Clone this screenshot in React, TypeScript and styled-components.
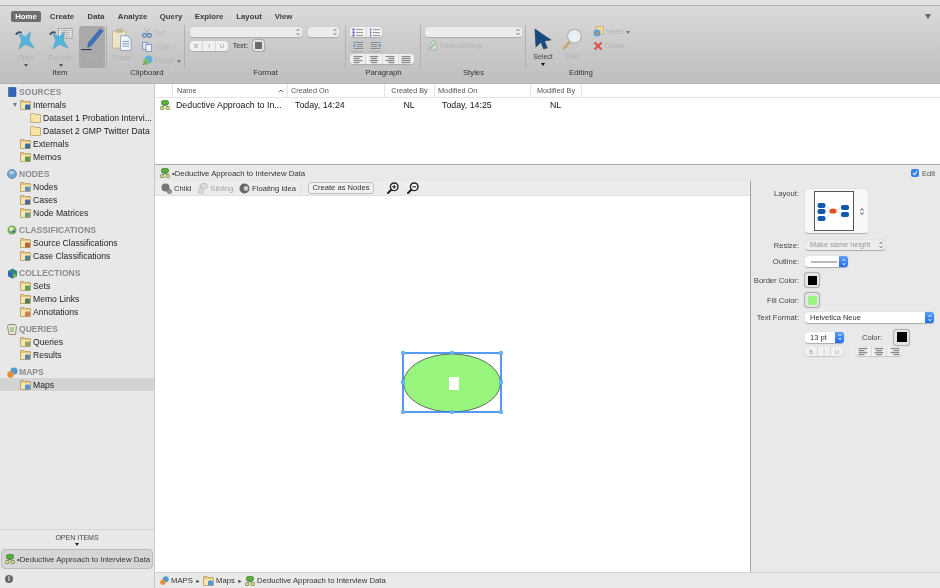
import React from "react";
import styled, { createGlobalStyle } from "styled-components";

const Global = createGlobalStyle`
  html, body {
    margin: 0;
    padding: 0;
    background: #e8e8e8;
    overflow: hidden;
  }
  * { box-sizing: border-box; }
`;

const Page = styled.div`
  width: 940px;
  height: 588px;
  display: flex;
  flex-direction: column;
  overflow: hidden;
  font-family: "Liberation Sans", Arial, sans-serif;
  color: #333;
  filter: blur(0.45px);
`;

/* ---------- ribbon ---------- */

const TitleStrip = styled.div`
  height: 6px;
  flex: none;
  background: #e2e0e2;
  border-bottom: 1px solid #b4b4b4;
`;

const Ribbon = styled.div`
  height: 78px;
  flex: none;
  position: relative;
  background: linear-gradient(#dcdadc, #c9c8c9 60%, #bfbfbf);
  border-bottom: 1px solid #b2b2b2;
`;

const Tabs = styled.div`
  display: flex;
  height: 18px;
  padding: 5px 0 0 11px;
`;

const Tab = styled.div<{ $active?: boolean; $w: number }>`
  width: ${(p) => p.$w}px;
  height: 11px;
  line-height: 11px;
  font-size: 7.8px;
  font-weight: 700;
  text-align: center;
  border-radius: 2px;
  color: ${(p) => (p.$active ? "#fff" : "#3c3c3c")};
  background: ${(p) => (p.$active ? "#6e6e6e" : "transparent")};
`;

const OverflowArrow = styled.div`
  position: absolute;
  right: 9px;
  top: 8px;
  border-left: 3px solid transparent;
  border-right: 3px solid transparent;
  border-top: 5px solid #666;
`;

const Groups = styled.div`
  display: flex;
  padding-left: 10px;
`;

const Group = styled.div<{ $w: number; $last?: boolean }>`
  width: ${(p) => p.$w}px;
  height: 53px;
  display: flex;
  flex-direction: column;
  position: relative;
  &::after {
    content: "";
    display: ${(p) => (p.$last ? "none" : "block")};
    position: absolute;
    right: 0;
    top: 1px;
    height: 44px;
    width: 1px;
    background: #b0b0b0;
  }
`;

const GroupBody = styled.div<{ $pad?: number }>`
  height: 44px;
  display: flex;
  padding-left: ${(p) => p.$pad ?? 0}px;
`;

const GroupLabel = styled.div<{ $shift?: number }>`
  font-size: 7.8px;
  line-height: 9px;
  text-align: center;
  color: #333;
  transform: translateX(${(p) => p.$shift ?? 0}px);
`;

const BigTool = styled.div<{ $w: number; $pressed?: boolean }>`
  width: ${(p) => p.$w}px;
  height: 42px;
  margin-top: 2px;
  display: flex;
  flex-direction: column;
  align-items: center;
  border-radius: 3px;
  padding-top: 2px;
  background: ${(p) => (p.$pressed ? "#a9a9a9" : "transparent")};
  & > svg { flex: none; }
`;

const BigLabel = styled.div<{ $on?: boolean }>`
  font-size: 7px;
  line-height: 8px;
  margin-top: 3px;
  color: ${(p) => (p.$on ? "#444" : "#b3b3b3")};
`;

const DropArrow = styled.div`
  margin-top: 2px;
  border-left: 2px solid transparent;
  border-right: 2px solid transparent;
  border-top: 3px solid ${(p) => p.color ?? "#555"};
`;

const SmallStack = styled.div<{ $gap: number; $top: number; $left: number }>`
  display: flex;
  flex-direction: column;
  gap: ${(p) => p.$gap}px;
  margin: ${(p) => p.$top}px 0 0 ${(p) => p.$left}px;
`;

const SmallTool = styled.div`
  display: flex;
  align-items: center;
  gap: 2px;
  height: 11px;
  font-size: 7px;
  color: #b5b5b5;
  white-space: nowrap;
`;

const SelectBox = styled.div<{ $w: number; $h?: number }>`
  width: ${(p) => p.$w}px;
  height: ${(p) => p.$h ?? 10}px;
  flex: none;
  position: relative;
  font-size: 7.4px;
  line-height: 10px;
  padding-left: 5px;
  color: #999;
  background: #ececec;
  border-radius: 3px;
  box-shadow: 0 0.5px 1px #aaa;
`;

const SelectChevrons = styled.span`
  position: absolute;
  right: 2px;
  top: 1px;
  display: flex;
`;

const Row = styled.div<{ $top?: number; $left?: number; $gap?: number }>`
  display: flex;
  align-items: center;
  gap: ${(p) => p.$gap ?? 0}px;
  margin: ${(p) => p.$top ?? 0}px 0 0 ${(p) => p.$left ?? 0}px;
`;

const Column = styled.div<{ $top?: number; $left?: number }>`
  display: flex;
  flex-direction: column;
  margin: ${(p) => p.$top ?? 0}px 0 0 ${(p) => p.$left ?? 0}px;
`;

const Segmented = styled.div<{ $w: number; $h?: number }>`
  width: ${(p) => p.$w}px;
  height: ${(p) => p.$h ?? 10}px;
  display: flex;
  align-items: stretch;
  background: #f1f1f1;
  border-radius: 3px;
  box-shadow: 0 0.5px 1px #aaa;
`;

const Segment = styled.div<{ $on?: boolean; $size?: number }>`
  flex: 1;
  display: flex;
  align-items: center;
  justify-content: center;
  font-size: ${(p) => p.$size ?? 6}px;
  color: #9a9a9a;
  background: ${(p) => (p.$on ? "#c9c9c9" : "transparent")};
  & + & { border-left: 1px solid #d6d6d6; }
`;

const TinyLabel = styled.span`
  font-size: 6.5px;
  font-weight: 700;
  color: #555;
`;

const Swatch = styled.div<{ $fill: string; $size?: number; $inner?: number }>`
  width: ${(p) => p.$size ?? 14}px;
  height: ${(p) => p.$size ?? 14}px;
  flex: none;
  display: flex;
  align-items: center;
  justify-content: center;
  background: #e4e4e4;
  border-radius: 3px;
  box-shadow: 0 0 1px 0.5px #aaa;
  &::after {
    content: "";
    width: ${(p) => p.$inner ?? 9}px;
    height: ${(p) => p.$inner ?? 9}px;
    background: ${(p) => p.$fill};
  }
`;

const ResetLabel = styled.span`
  font-size: 6.5px;
  color: #b5b5b5;
`;

/* ---------- body ---------- */

const Body = styled.div`
  flex: 1;
  min-height: 0;
  display: flex;
`;

const Sidebar = styled.div`
  width: 155px;
  flex: none;
  display: flex;
  flex-direction: column;
  background: #e8e8e8;
  border-right: 1px solid #c9c9c9;
`;

const Tree = styled.div`
  flex: 1;
  padding-top: 2px;
`;

const SectionHead = styled.div<{ $first?: boolean }>`
  height: 12px;
  margin-top: ${(p) => (p.$first ? 0 : 5)}px;
  padding-left: 7px;
  display: flex;
  align-items: center;
  font-size: 8.5px;
  font-weight: 700;
  letter-spacing: 0.05px;
  color: #8a8a90;
  white-space: nowrap;
`;

const HeadIcon = styled.span`
  width: 12px;
  flex: none;
  display: flex;
`;

const TreeRow = styled.div<{ $depth?: number; $selected?: boolean }>`
  height: 13px;
  display: flex;
  align-items: center;
  gap: 2px;
  padding-left: ${(p) => (p.$depth === 2 ? 30 : 20)}px;
  font-size: 8.6px;
  color: #1c1c1c;
  white-space: nowrap;
  background: ${(p) => (p.$selected ? "#d3d3d3" : "transparent")};
  & > svg { flex: none; }
`;

const Disclosure = styled.span`
  position: absolute;
  margin-left: -7px;
  border-left: 2.5px solid transparent;
  border-right: 2.5px solid transparent;
  border-top: 4px solid #777;
`;

const OpenItems = styled.div`
  height: 40px;
  border-top: 1px solid #d6d6d6;
  display: flex;
  flex-direction: column;
  align-items: center;
  padding-top: 3px;
`;

const OpenTitle = styled.div`
  font-size: 7px;
  line-height: 9px;
  color: #444;
`;

const OpenArrow = styled.div`
  margin-top: 1px;
  border-left: 2.5px solid transparent;
  border-right: 2.5px solid transparent;
  border-top: 3px solid #222;
`;

const OpenButton = styled.div`
  width: 152px;
  height: 21px;
  margin-top: 3px;
  display: flex;
  align-items: center;
  gap: 2px;
  padding-left: 3px;
  font-size: 7.8px;
  color: #333;
  white-space: nowrap;
  background: #d6d6d6;
  border: 1px solid #bbb;
  border-radius: 4px;
`;

const InfoBar = styled.div`
  height: 19px;
  padding-left: 5px;
  display: flex;
  align-items: center;
`;

const InfoDot = styled.div`
  width: 8px;
  height: 8px;
  border-radius: 50%;
  background: #666;
  color: #e8e8e8;
  font-size: 7px;
  font-weight: 700;
  line-height: 8px;
  text-align: center;
`;

const Main = styled.div`
  flex: 1;
  min-width: 0;
  display: flex;
  flex-direction: column;
  background: #fff;
`;

const ListArea = styled.div`
  height: 80px;
  flex: none;
  background: #fff;
`;

const listColumns = "17px 115px 97px 50px 96px 51px 1fr";

const ListHead = styled.div`
  height: 14px;
  display: grid;
  grid-template-columns: ${listColumns};
  border-bottom: 1px solid #e4e4e4;
`;

const HeadCell = styled.div<{ $center?: boolean; $pad?: number }>`
  font-size: 7.3px;
  line-height: 13px;
  color: #555;
  padding: 0 3px 0 ${(p) => p.$pad ?? 3}px;
  border-left: 1px solid #e4e4e4;
  display: flex;
  align-items: center;
  justify-content: ${(p) => (p.$center ? "center" : "space-between")};
  white-space: nowrap;
`;

const BlankHead = styled.div``;

const ListRow = styled.div`
  height: 14px;
  display: grid;
  grid-template-columns: ${listColumns};
  align-items: center;
  font-size: 8.8px;
  color: #161616;
`;

const RowIcon = styled.div`
  padding-left: 5px;
  display: flex;
`;

const RowCell = styled.div<{ $center?: boolean; $pad?: number }>`
  text-align: ${(p) => (p.$center ? "center" : "left")};
  padding-left: ${(p) => p.$pad ?? 0}px;
  white-space: nowrap;
`;

const DetailBar = styled.div`
  height: 17px;
  flex: none;
  display: flex;
  align-items: center;
  padding: 0 5px;
  gap: 2px;
  font-size: 7.8px;
  color: #333;
  background: #e9e9e9;
  border-top: 1px solid #a9a9a9;
`;

const EditToggle = styled.div`
  margin-left: auto;
  display: flex;
  align-items: center;
  gap: 3px;
  font-size: 7.5px;
  color: #555;
`;

const CheckBox = styled.div`
  width: 8px;
  height: 8px;
  border-radius: 2px;
  background: #3a80e8;
  display: flex;
`;

const Workspace = styled.div`
  flex: 1;
  min-height: 0;
  display: flex;
`;

const MapColumn = styled.div`
  width: 595px;
  flex: none;
  display: flex;
  flex-direction: column;
`;

const MapToolbar = styled.div`
  height: 15px;
  flex: none;
  display: flex;
  align-items: center;
  padding-left: 6px;
  font-size: 7.6px;
  background: #ececec;
  border-bottom: 1px solid #e0e0e0;
`;

const MapTool = styled.div<{ $dim?: boolean; $gapAfter: number }>`
  display: flex;
  align-items: center;
  gap: 2px;
  margin-right: ${(p) => p.$gapAfter}px;
  color: ${(p) => (p.$dim ? "#a5a5a5" : "#333")};
  white-space: nowrap;
`;

const ToolDivider = styled.div<{ $after: number }>`
  width: 1px;
  height: 13px;
  background: #dcdcdc;
  margin-right: ${(p) => p.$after}px;
`;

const NodesButton = styled.div`
  width: 66px;
  height: 12px;
  margin-right: 13px;
  line-height: 10px;
  text-align: center;
  font-size: 7.6px;
  color: #333;
  white-space: nowrap;
  background: #f1f1f1;
  border: 1px solid #c0c0c0;
  border-radius: 3px;
`;

const ZoomBtn = styled.div`
  width: 12px;
  height: 12px;
  margin-right: 8px;
  display: flex;
`;

const MapCanvas = styled.div`
  flex: 1;
  position: relative;
  background: #fff;
`;

const NodeShape = styled.svg`
  position: absolute;
  left: 243px;
  top: 152px;
`;

const Inspector = styled.div`
  flex: 1;
  min-width: 0;
  padding-top: 8px;
  background: #e9e9e9;
  border-left: 1px solid #a3a3a3;
`;

const PropRow = styled.div<{ $h: number; $top?: number }>`
  height: ${(p) => p.$h}px;
  margin-top: ${(p) => p.$top ?? 0}px;
  display: flex;
  align-items: center;
  gap: 6px;
`;

const PropLabel = styled.div<{ $alignTop?: boolean }>`
  width: 48px;
  flex: none;
  text-align: right;
  font-size: 7.6px;
  line-height: 9px;
  color: #444;
  white-space: nowrap;
  display: flex;
  justify-content: flex-end;
  align-self: ${(p) => (p.$alignTop ? "flex-start" : "center")};
`;

const LayoutCard = styled.div`
  width: 63px;
  height: 44px;
  display: flex;
  align-items: center;
  padding-left: 9px;
  background: #f7f7f7;
  border-radius: 3px;
  box-shadow: 0 0.5px 1px #b0b0b0;
`;

const LayoutPreview = styled.div`
  width: 40px;
  height: 40px;
  background: #fff;
  border: 1px solid #555;
`;

const Stepper = styled.div`
  margin-left: 6px;
  display: flex;
`;

const BlueSelectBox = styled.div<{ $w: number }>`
  width: ${(p) => p.$w}px;
  height: 11px;
  flex: none;
  position: relative;
  display: flex;
  align-items: center;
  padding-left: 5px;
  font-size: 7.5px;
  color: #333;
  background: #fff;
  border-radius: 3px;
  box-shadow: 0 0.5px 1px #aaa;
`;

const BlueCap = styled.span`
  position: absolute;
  right: 0;
  top: 0;
  bottom: 0;
  width: 9px;
  display: flex;
  align-items: center;
  justify-content: center;
  border-radius: 0 3px 3px 0;
  background: linear-gradient(#5d9ff6, #1f6cf0);
`;

const OutlineStroke = styled.div`
  width: 26px;
  height: 2px;
  background: #bbb;
  margin-left: 1px;
`;

const ColorLabel = styled.span`
  font-size: 7.5px;
  color: #444;
  margin: 0 -1px 0 12px;
  width: 27px;
`;

const StatusBar = styled.div`
  height: 16px;
  flex: none;
  display: flex;
  align-items: center;
  gap: 2px;
  padding-left: 5px;
  font-size: 7.7px;
  color: #333;
  background: #e9e9e9;
  border-top: 1px solid #d0d0d0;
`;

const Crumb = styled.span`
  font-size: 5.5px;
  margin: 0 0.4px;
  color: #444;
`;

/* ---------- drawn icons ---------- */

function UpDown({ color = "#777", h = 8 }: { color?: string; h?: number }) {
  return (
    <svg width="4" height={h} viewBox="0 0 4 8">
      <path d="M0.5 3 L2 1 L3.5 3 M0.5 5 L2 7 L3.5 5" fill="none" stroke={color} strokeWidth="0.8" />
    </svg>
  );
}

function PopupSelect({ w, h, children }: { w: number; h?: number; children?: React.ReactNode }) {
  return (
    <SelectBox $w={w} $h={h}>
      {children}
      <SelectChevrons>
        <UpDown />
      </SelectChevrons>
    </SelectBox>
  );
}

function BlueSelect({ w, children }: { w: number; children?: React.ReactNode }) {
  return (
    <BlueSelectBox $w={w}>
      {children}
      <BlueCap>
        <UpDown color="#fff" />
      </BlueCap>
    </BlueSelectBox>
  );
}

function Folder({ badge, plain }: { badge?: string; plain?: boolean }) {
  return (
    <svg width="11" height="10" viewBox="0 0 11 10">
      <path d="M0.5 2 L0.5 1 Q0.5 0.5 1 0.5 H4 L5 1.5 H10 Q10.5 1.5 10.5 2 V9 Q10.5 9.5 10 9.5 H1 Q0.5 9.5 0.5 9 Z" fill={plain ? "#f6e5a6" : "#e6c67c"} stroke="#a58a4c" strokeWidth="0.6" />
      {!plain && <rect x="1" y="3" width="9" height="6" fill="#f8e6ae" />}
      {badge && <rect x="5" y="4.5" width="5" height="5" rx="1.2" fill={badge} />}
    </svg>
  );
}

function MapIcon({ size = 10 }: { size?: number }) {
  return (
    <svg width={size} height={size} viewBox="0 0 10 10" style={{ flex: "none" }}>
      <path d="M5 5 L2 7 M5 5 L8 7" stroke="#555" strokeWidth="0.8" />
      <rect x="1.5" y="0.5" width="7" height="4.5" rx="1.6" fill="#55b23a" stroke="#2f6a22" strokeWidth="0.6" />
      <rect x="0.4" y="6.6" width="3.6" height="2.9" rx="0.8" fill="#d8e28c" stroke="#4e6b2b" strokeWidth="0.6" />
      <rect x="6" y="6.6" width="3.6" height="2.9" rx="0.8" fill="#d8e28c" stroke="#4e6b2b" strokeWidth="0.6" />
    </svg>
  );
}

function Lines({ kind }: { kind: "left" | "center" | "right" | "full" }) {
  const rows = [1.5, 3.5, 5.5, 7.5];
  const span = (i: number) => {
    const short = i % 2 === 1 ? 6 : 9;
    if (kind === "full") return [0.5, 9];
    if (kind === "center") return [(10 - short) / 2, short];
    if (kind === "right") return [9.5 - short, short];
    return [0.5, short];
  };
  return (
    <svg width="10" height="9" viewBox="0 0 10 9">
      {rows.map((y, i) => (
        <rect key={y} x={span(i)[0]} y={y - 0.6} width={span(i)[1]} height="1.3" fill="#8c8c8c" />
      ))}
    </svg>
  );
}

function BulletList({ numbered }: { numbered?: boolean }) {
  return (
    <svg width="11" height="9" viewBox="0 0 11 9">
      {[1.5, 4.5, 7.5].map((y) => (
        <g key={y}>
          <rect x={numbered ? 1 : 0.5} y={y - 1} width={numbered ? 1.2 : 2} height="2" fill="#5e55c6" />
          <rect x="4" y={y - 0.5} width="7" height="1" fill="#999" />
        </g>
      ))}
    </svg>
  );
}

function Indent({ flip }: { flip?: boolean }) {
  return (
    <svg width="11" height="9" viewBox="0 0 11 9" style={flip ? { transform: "scaleX(-1)" } : undefined}>
      {[1, 3, 5, 7].map((y) => (
        <rect key={y} x={y === 3 || y === 5 ? 4 : 0.5} y={y} width={y === 3 || y === 5 ? 6 : 10} height="1" fill="#8c8c8c" />
      ))}
      <path d="M0.5 2.5 L3 4.5 L0.5 6.5 Z" fill="#5b8fd0" />
    </svg>
  );
}

function PinFigure({ card }: { card?: boolean }) {
  return (
    <svg width="25" height="23" viewBox="0 0 26 24">
      {card && (
        <g>
          <rect x="11" y="0.5" width="14" height="10" fill="#eee" stroke="#777" strokeWidth="0.6" />
          {[2.5, 4.5, 6.5, 8.5].map((y) => (
            <path key={y} d={`M13 ${y} H23`} stroke="#888" strokeWidth="0.7" />
          ))}
        </g>
      )}
      <path d="M5 6 L12 9 L17 4 L16 13 L21 21 L12 17 L5 22 L8 13 Z" fill="#54b5dc" stroke="#4893b5" strokeWidth="0.5" />
      <path d="M2 7 Q4 3 8 5" fill="none" stroke="#33536e" strokeWidth="2" />
    </svg>
  );
}

function PencilIcon() {
  return (
    <svg width="23" height="23" viewBox="0 0 24 24">
      <path d="M20 1 L23 3 L11 18 L7 20 L8 15 Z" fill="#3f72c4" stroke="#25508f" strokeWidth="0.6" />
      <path d="M0 22.5 H11" stroke="#33336a" strokeWidth="1.2" />
    </svg>
  );
}

function PasteIcon() {
  return (
    <svg width="20" height="23" viewBox="0 0 21 24">
      <rect x="0.5" y="3" width="14" height="18" rx="1" fill="#ece4c4" stroke="#a89e7a" strokeWidth="0.6" />
      <rect x="4" y="0.8" width="7" height="4" rx="1" fill="#bdb69a" />
      <path d="M9 8 H16 L20 12 V23.5 H9 Z" fill="#f3f6fa" stroke="#6b88ad" strokeWidth="0.7" />
      {[14, 16.5, 19].map((y) => (
        <path key={y} d={`M11 ${y} H18`} stroke="#6b88ad" strokeWidth="0.9" />
      ))}
    </svg>
  );
}

function ScissorsIcon() {
  return (
    <svg width="10" height="10" viewBox="0 0 10 10">
      <path d="M2.5 0.5 L6 6 M7.5 0.5 L4 6" stroke="#9aa" strokeWidth="0.8" />
      <circle cx="2.5" cy="7.5" r="1.9" fill="none" stroke="#4a7fb5" strokeWidth="1.1" />
      <circle cx="7.5" cy="7.5" r="1.9" fill="none" stroke="#4a7fb5" strokeWidth="1.1" />
    </svg>
  );
}

function CopyIcon() {
  return (
    <svg width="10" height="10" viewBox="0 0 10 10">
      <rect x="0.5" y="0.5" width="5.5" height="7" fill="#dce6f2" stroke="#5e84b0" strokeWidth="0.7" />
      <rect x="4" y="2.5" width="5.5" height="7" fill="#eef3f9" stroke="#5e84b0" strokeWidth="0.7" />
    </svg>
  );
}

function MergeIcon() {
  return (
    <svg width="11" height="11" viewBox="0 0 11 11">
      <circle cx="6.5" cy="4.5" r="4" fill="#5fb0d8" />
      <circle cx="4" cy="7" r="3" fill="#7cbf62" />
      <path d="M1 10 L4 7" stroke="#777" strokeWidth="1" />
    </svg>
  );
}

function ArrowCursor() {
  return (
    <svg width="18" height="22" viewBox="0 0 19 23">
      <path d="M1 1 L18 12.5 L11 13.5 L14 21 L10 22 L7.5 15 L2 20 Z" fill="#174a80" stroke="#0c2c52" strokeWidth="0.5" />
    </svg>
  );
}

function Magnifier() {
  return (
    <svg width="21" height="22" viewBox="0 0 22 24">
      <path d="M8 15 L2 22" stroke="#c9a66b" strokeWidth="3" strokeLinecap="round" />
      <circle cx="13" cy="9" r="7.5" fill="#eaf0f3" stroke="#b5b5b5" strokeWidth="1.5" />
    </svg>
  );
}

function InsertIcon() {
  return (
    <svg width="11" height="11" viewBox="0 0 11 11">
      <rect x="3" y="0.5" width="7.5" height="8" fill="#f0d899" stroke="#b9a46b" strokeWidth="0.6" />
      <circle cx="4" cy="7" r="3.5" fill="#4fa3d8" />
      <path d="M2 7 H6 M4 5 V9" stroke="#e78b3c" strokeWidth="1" />
    </svg>
  );
}

function DeleteIcon() {
  return (
    <svg width="10" height="10" viewBox="0 0 10 10">
      <path d="M1.5 1.5 L8.5 8.5 M8.5 1.5 L1.5 8.5" stroke="#d9534a" strokeWidth="2.2" />
    </svg>
  );
}

function ResetIcon() {
  return (
    <svg width="11" height="11" viewBox="0 0 11 11">
      <path d="M1 10 L5 1 L9 1 L10 10 Z" fill="#cfe0c8" stroke="#8aa98a" strokeWidth="0.6" />
      <path d="M3 9 L8 3" stroke="#6a8fb0" strokeWidth="1" />
    </svg>
  );
}

function BookIcon() {
  return (
    <svg width="10" height="10" viewBox="0 0 10 10">
      <rect x="1.5" y="0.3" width="7.5" height="9.4" rx="0.6" fill="#3265b8" stroke="#244b8c" strokeWidth="0.5" />
    </svg>
  );
}

function BallIcon() {
  return (
    <svg width="10" height="10" viewBox="0 0 10 10">
      <circle cx="5" cy="5" r="4.5" fill="#76a8cf" stroke="#4c7a9f" strokeWidth="0.7" />
      <ellipse cx="4.5" cy="3.5" rx="2.5" ry="1.6" fill="#b6d3e8" />
    </svg>
  );
}

function GlobeIcon() {
  return (
    <svg width="10" height="10" viewBox="0 0 10 10">
      <circle cx="5" cy="5" r="4.5" fill="#6fb24e" />
      <path d="M2 3 Q5 1 7 3 L6 6 L3 6 Z" fill="#eae4c5" />
      <circle cx="6.5" cy="6.5" r="1.5" fill="#3f78b8" />
    </svg>
  );
}

function CubesIcon() {
  return (
    <svg width="11" height="11" viewBox="0 0 11 11">
      <path d="M5.5 0.5 L10 3 V8 L5.5 10.5 L1 8 V3 Z" fill="#2f8a7c" />
      <path d="M1 3 L5.5 5.5 V10.5 L1 8 Z" fill="#3266b5" />
      <circle cx="7.5" cy="7.5" r="2" fill="#6fb24e" />
    </svg>
  );
}

function QueryIcon() {
  return (
    <svg width="10" height="11" viewBox="0 0 10 11">
      <path d="M1.5 0.5 H8 L9.5 2.5 L8.5 10.5 H2 L0.5 2.5 Z" fill="#e8e6cf" stroke="#6c6c55" strokeWidth="0.7" />
      <rect x="3" y="3" width="4" height="5" fill="#a9cf9a" />
    </svg>
  );
}

function MapsHeadIcon({ size = 11 }: { size?: number }) {
  return (
    <svg width={size} height={size} viewBox="0 0 11 11">
      <circle cx="7" cy="4" r="3.6" fill="#4f9ad2" />
      <circle cx="3.5" cy="7.5" r="3.2" fill="#e2913a" />
    </svg>
  );
}

function ChildIcon() {
  return (
    <svg width="11" height="11" viewBox="0 0 11 11">
      <circle cx="4.5" cy="4.5" r="4" fill="#777" />
      <circle cx="8.5" cy="8.5" r="2.2" fill="#999" stroke="#555" strokeWidth="0.5" />
    </svg>
  );
}

function SiblingIcon() {
  return (
    <svg width="10" height="11" viewBox="0 0 10 11">
      <rect x="3" y="0.5" width="6" height="5" rx="1.5" fill="#ddd" stroke="#aaa" strokeWidth="0.6" />
      <rect x="0.5" y="6" width="5" height="4.5" rx="1.5" fill="#ddd" stroke="#aaa" strokeWidth="0.6" />
      <path d="M2 2 V5" stroke="#aaa" strokeWidth="0.7" />
    </svg>
  );
}

function FloatIcon() {
  return (
    <svg width="11" height="11" viewBox="0 0 11 11">
      <circle cx="5.5" cy="5.5" r="5" fill="#666" />
      <circle cx="7" cy="5.5" r="2.4" fill="#ccc" />
    </svg>
  );
}

function ZoomGlass({ plus }: { plus?: boolean }) {
  return (
    <svg width="12" height="12" viewBox="0 0 12 12">
      <path d="M4.5 7.5 L1 11" stroke="#222" strokeWidth="2" strokeLinecap="round" />
      <circle cx="7.2" cy="4.8" r="3.8" fill="#fff" stroke="#222" strokeWidth="1.4" />
      <path d="M5.2 4.8 H9.2" stroke="#222" strokeWidth="1.1" />
      {plus && <path d="M7.2 2.8 V6.8" stroke="#222" strokeWidth="1.1" />}
    </svg>
  );
}

function SortCaret() {
  return (
    <svg width="6" height="4" viewBox="0 0 6 4">
      <path d="M1 3.2 L3 1 L5 3.2" fill="none" stroke="#555" strokeWidth="0.9" />
    </svg>
  );
}

function LayoutDiagram() {
  return (
    <svg width="38" height="38" viewBox="0 0 38 38">
      <path d="M11 13 L18 19 M11 19 H18 M11 26 L18 19 M18 19 L27 15 M18 19 L27 22" stroke="#ddd" strokeWidth="0.8" />
      {[
        [2.5, 11],
        [2.5, 17],
        [2.5, 24],
        [26, 13],
        [26, 20],
      ].map(([x, y]) => (
        <rect key={`${x}-${y}`} x={x} y={y} width="8" height="5" rx="2" fill="#0f57a8" />
      ))}
      <ellipse cx="18" cy="19" rx="3.6" ry="2.6" fill="#e8501f" />
    </svg>
  );
}

const handles = [
  [5, 5],
  [54, 5],
  [103, 5],
  [5, 34],
  [103, 34],
  [5, 64],
  [54, 64],
  [103, 64],
];

const tabs: [string, number][] = [
  ["Home", 30],
  ["Create", 42],
  ["Data", 26],
  ["Analyze", 47],
  ["Query", 30],
  ["Explore", 46],
  ["Layout", 34],
  ["View", 35],
];

const tree: { head: string; icon: React.ReactNode; items: { name: string; badge?: string; depth?: number; open?: boolean; selected?: boolean }[] }[] = [
  {
    head: "SOURCES",
    icon: <BookIcon />,
    items: [
      { name: "Internals", badge: "#2f6fa8", open: true },
      { name: "Dataset 1 Probation Intervi...", depth: 2 },
      { name: "Dataset 2 GMP Twitter Data", depth: 2 },
      { name: "Externals", badge: "#3b6fa0" },
      { name: "Memos", badge: "#5a9a4a" },
    ],
  },
  {
    head: "NODES",
    icon: <BallIcon />,
    items: [
      { name: "Nodes", badge: "#5b94c2" },
      { name: "Cases", badge: "#53679e" },
      { name: "Node Matrices", badge: "#6a9a8a" },
    ],
  },
  {
    head: "CLASSIFICATIONS",
    icon: <GlobeIcon />,
    items: [
      { name: "Source Classifications", badge: "#b5643a" },
      { name: "Case Classifications", badge: "#4f7f9a" },
    ],
  },
  {
    head: "COLLECTIONS",
    icon: <CubesIcon />,
    items: [
      { name: "Sets", badge: "#5aa05a" },
      { name: "Memo Links", badge: "#4f7f5a" },
      { name: "Annotations", badge: "#c9834f" },
    ],
  },
  {
    head: "QUERIES",
    icon: <QueryIcon />,
    items: [
      { name: "Queries", badge: "#8aa86a" },
      { name: "Results", badge: "#5f86b0" },
    ],
  },
  {
    head: "MAPS",
    icon: <MapsHeadIcon />,
    items: [{ name: "Maps", badge: "#4f9ad2", selected: true }],
  },
];

export default function App() {
  return (
    <Page>
      <Global />
      <TitleStrip />
      <Ribbon>
        <Tabs>
          {tabs.map(([name, w], i) => (
            <Tab key={name} $w={w} $active={i === 0}>
              {name}
            </Tab>
          ))}
        </Tabs>
        <OverflowArrow />
        <Groups>
          <Group $w={97}>
            <GroupBody>
              <BigTool $w={32}>
                <PinFigure />
                <BigLabel>Open</BigLabel>
                <DropArrow />
              </BigTool>
              <BigTool $w={37}>
                <PinFigure card />
                <BigLabel>Get Info</BigLabel>
                <DropArrow />
              </BigTool>
              <BigTool $w={26} $pressed>
                <PencilIcon />
                <BigLabel>Edit</BigLabel>
              </BigTool>
            </GroupBody>
            <GroupLabel $shift={1.5}>Item</GroupLabel>
          </Group>
          <Group $w={78}>
            <GroupBody $pad={3}>
              <BigTool $w={24}>
                <PasteIcon />
                <BigLabel>Paste</BigLabel>
              </BigTool>
              <SmallStack $gap={3} $top={3} $left={8}>
                <SmallTool>
                  <ScissorsIcon />
                  Cut
                </SmallTool>
                <SmallTool>
                  <CopyIcon />
                  Copy
                </SmallTool>
                <SmallTool>
                  <MergeIcon />
                  Merge
                  <DropArrow color="#777" />
                </SmallTool>
              </SmallStack>
            </GroupBody>
            <GroupLabel $shift={1}>Clipboard</GroupLabel>
          </Group>
          <Group $w={161}>
            <GroupBody $pad={5}>
              <Column $top={3}>
                <Row $gap={6}>
                  <PopupSelect w={112} />
                  <PopupSelect w={31} />
                </Row>
                <Row $top={3} $gap={5}>
                  <Segmented $w={38} $h={10}>
                    <Segment>B</Segment>
                    <Segment>I</Segment>
                    <Segment>U</Segment>
                  </Segmented>
                  <TinyLabel>Text:</TinyLabel>
                  <Swatch $fill="#6a6a6a" $size={11} $inner={7} />
                </Row>
              </Column>
            </GroupBody>
            <GroupLabel>Format</GroupLabel>
          </Group>
          <Group $w={75}>
            <GroupBody $pad={4}>
              <Column $top={3}>
                <Segmented $w={32}>
                  <Segment>
                    <BulletList />
                  </Segment>
                  <Segment>
                    <BulletList numbered />
                  </Segment>
                </Segmented>
                <Row $top={3} $gap={1}>
                  <Segmented $w={16} $h={11}>
                    <Segment $on>
                      <Indent />
                    </Segment>
                  </Segmented>
                  <Segmented $w={16} $h={11}>
                    <Segment $on>
                      <Indent flip />
                    </Segment>
                  </Segmented>
                </Row>
                <Row $top={3}>
                  <Segmented $w={64}>
                    <Segment>
                      <Lines kind="left" />
                    </Segment>
                    <Segment>
                      <Lines kind="center" />
                    </Segment>
                    <Segment>
                      <Lines kind="right" />
                    </Segment>
                    <Segment>
                      <Lines kind="full" />
                    </Segment>
                  </Segmented>
                </Row>
              </Column>
            </GroupBody>
            <GroupLabel>Paragraph</GroupLabel>
          </Group>
          <Group $w={105}>
            <GroupBody $pad={4}>
              <Column $top={3}>
                <PopupSelect w={97} />
                <Row $top={3} $left={2} $gap={2}>
                  <ResetIcon />
                  <ResetLabel>Reset Settings</ResetLabel>
                </Row>
              </Column>
            </GroupBody>
            <GroupLabel>Styles</GroupLabel>
          </Group>
          <Group $w={110} $last>
            <GroupBody $pad={3}>
              <BigTool $w={28}>
                <ArrowCursor />
                <BigLabel $on>Select</BigLabel>
                <DropArrow color="#111" />
              </BigTool>
              <BigTool $w={30}>
                <Magnifier />
                <BigLabel>Find</BigLabel>
              </BigTool>
              <SmallStack $gap={3} $top={2} $left={6}>
                <SmallTool>
                  <InsertIcon />
                  Insert
                  <DropArrow color="#777" />
                </SmallTool>
                <SmallTool>
                  <DeleteIcon />
                  Delete
                </SmallTool>
              </SmallStack>
            </GroupBody>
            <GroupLabel>Editing</GroupLabel>
          </Group>
        </Groups>
      </Ribbon>
      <Body>
        <Sidebar>
          <Tree>
            {tree.map((section, s) => (
              <div key={section.head}>
                <SectionHead $first={s === 0}>
                  <HeadIcon>{section.icon}</HeadIcon>
                  {section.head}
                </SectionHead>
                {section.items.map((item) => (
                  <TreeRow key={item.name} $depth={item.depth} $selected={item.selected}>
                    {item.open && <Disclosure />}
                    <Folder badge={item.badge} plain={item.depth === 2} />
                    {item.name}
                  </TreeRow>
                ))}
              </div>
            ))}
          </Tree>
          <OpenItems>
            <OpenTitle>OPEN ITEMS</OpenTitle>
            <OpenArrow />
            <OpenButton>
              <MapIcon />
              •Deductive Approach to Interview Data
            </OpenButton>
          </OpenItems>
          <InfoBar>
            <InfoDot>i</InfoDot>
          </InfoBar>
        </Sidebar>
        <Main>
          <ListArea>
            <ListHead>
              <BlankHead />
              <HeadCell $pad={4}>
                Name
                <SortCaret />
              </HeadCell>
              <HeadCell>Created On</HeadCell>
              <HeadCell $center>Created By</HeadCell>
              <HeadCell>Modified On</HeadCell>
              <HeadCell $center>Modified By</HeadCell>
              <HeadCell />
            </ListHead>
            <ListRow>
              <RowIcon>
                <MapIcon />
              </RowIcon>
              <RowCell $pad={4}>Deductive Approach to In...</RowCell>
              <RowCell $pad={8}>Today, 14:24</RowCell>
              <RowCell $center>NL</RowCell>
              <RowCell $pad={8}>Today, 14:25</RowCell>
              <RowCell $center>NL</RowCell>
            </ListRow>
          </ListArea>
          <DetailBar>
            <MapIcon />
            •Deductive Approach to Interview Data
            <EditToggle>
              <CheckBox>
                <svg width="8" height="8" viewBox="0 0 8 8">
                  <path d="M2 4 L3.5 5.7 L6 2.2" fill="none" stroke="#fff" strokeWidth="1.1" />
                </svg>
              </CheckBox>
              Edit
            </EditToggle>
          </DetailBar>
          <Workspace>
            <MapColumn>
              <MapToolbar>
                <MapTool $gapAfter={7}>
                  <ChildIcon />
                  Child
                </MapTool>
                <MapTool $dim $gapAfter={6}>
                  <SiblingIcon />
                  Sibling
                </MapTool>
                <MapTool $gapAfter={5}>
                  <FloatIcon />
                  Floating Idea
                </MapTool>
                <ToolDivider $after={6} />
                <NodesButton>Create as Nodes</NodesButton>
                <ZoomBtn>
                  <ZoomGlass plus />
                </ZoomBtn>
                <ZoomBtn>
                  <ZoomGlass />
                </ZoomBtn>
              </MapToolbar>
              <MapCanvas>
                <NodeShape width="110" height="72" viewBox="0 0 110 72">
                  <ellipse cx="54" cy="35" rx="48.5" ry="29" fill="#98f67f" stroke="#5f6f5a" strokeWidth="1" />
                  <rect x="51" y="29" width="10" height="13" fill="#fff" />
                  <rect x="5" y="5" width="98" height="59" fill="none" stroke="#2f80f2" strokeWidth="1.6" />
                  {handles.map(([x, y]) => (
                    <rect key={`${x}-${y}`} x={x - 2} y={y - 2} width="4" height="4" rx="1" fill="#6db0ee" />
                  ))}
                </NodeShape>
              </MapCanvas>
            </MapColumn>
            <Inspector>
              <PropRow $h={44}>
                <PropLabel $alignTop>Layout:</PropLabel>
                <LayoutCard>
                  <LayoutPreview>
                    <LayoutDiagram />
                  </LayoutPreview>
                  <Stepper>
                    <UpDown color="#333" h={9} />
                  </Stepper>
                </LayoutCard>
              </PropRow>
              <PropRow $h={10} $top={7}>
                <PropLabel>Resize:</PropLabel>
                <PopupSelect w={80}>Make same height</PopupSelect>
              </PropRow>
              <PropRow $h={11} $top={6}>
                <PropLabel>Outline:</PropLabel>
                <BlueSelect w={43}>
                  <OutlineStroke />
                </BlueSelect>
              </PropRow>
              <PropRow $h={14} $top={6}>
                <PropLabel>Border Color:</PropLabel>
                <Swatch $fill="#000" />
              </PropRow>
              <PropRow $h={14} $top={6}>
                <PropLabel>Fill Color:</PropLabel>
                <Swatch $fill="#98f67f" />
              </PropRow>
              <PropRow $h={11} $top={5}>
                <PropLabel>Text Format:</PropLabel>
                <BlueSelect w={129}>Helvetica Neue</BlueSelect>
              </PropRow>
              <PropRow $h={14} $top={7}>
                <PropLabel />
                <BlueSelect w={39}>13 pt</BlueSelect>
                <ColorLabel>Color:</ColorLabel>
                <Swatch $fill="#000" $size={15} $inner={10} />
              </PropRow>
              <PropRow $h={9} $top={3}>
                <PropLabel />
                <Segmented $w={38} $h={9}>
                  <Segment $size={5.5}>B</Segment>
                  <Segment $size={5.5}>I</Segment>
                  <Segment $size={5.5}>U</Segment>
                </Segmented>
                <Row $left={7}>
                  <Segmented $w={46} $h={9}>
                    <Segment>
                      <Lines kind="left" />
                    </Segment>
                    <Segment>
                      <Lines kind="center" />
                    </Segment>
                    <Segment>
                      <Lines kind="right" />
                    </Segment>
                  </Segmented>
                </Row>
              </PropRow>
            </Inspector>
          </Workspace>
          <StatusBar>
            <MapsHeadIcon size={9} />
            MAPS
            <Crumb>►</Crumb>
            <Folder badge="#4f9ad2" />
            Maps
            <Crumb>►</Crumb>
            <MapIcon />
            Deductive Approach to Interview Data
          </StatusBar>
        </Main>
      </Body>
    </Page>
  );
}
